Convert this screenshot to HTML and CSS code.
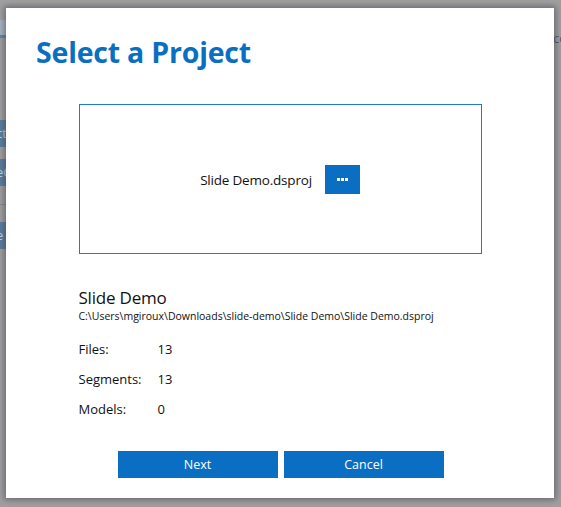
FILE: index.html
```html
<!DOCTYPE html>
<html>
<head>
<meta charset="utf-8">
<link rel="stylesheet" href="styles.css">
</head>
<body>
<div class="app">
  <div class="app-left">
    <div class="app-head"></div>
    <div class="app-tab tab1">ct</div>
    <div class="app-tab tab2">eC</div>
    <div class="app-sep"></div>
    <div class="app-tab tab3">e</div>
  </div>
  <div class="app-right">co</div>

  <div class="dialog">
    <h1 class="title">Select a Project</h1>
    <div class="content">
      <div class="picker">
        <span class="picker-name">Slide Demo.dsproj</span>
        <button class="browse" aria-label="Browse">
          <svg width="11" height="3" viewBox="0 0 11 3"><rect x="0" y="0" width="3" height="3" fill="#fff"/><rect x="4" y="0" width="3" height="3" fill="#fff"/><rect x="8" y="0" width="3" height="3" fill="#fff"/></svg>
        </button>
      </div>
      <div class="project">
        <div class="project-name">Slide Demo</div>
        <div class="project-path">C:\Users\mgiroux\Downloads\slide-demo\Slide Demo\Slide Demo.dsproj</div>
      </div>
      <dl class="stats">
        <dt>Files:</dt><dd>13</dd>
        <dt>Segments:</dt><dd>13</dd>
        <dt>Models:</dt><dd>0</dd>
      </dl>
    </div>
    <div class="actions">
      <button class="btn">Next</button>
      <button class="btn">Cancel</button>
    </div>
  </div>
</div>
</body>
</html>
```

FILE: styles.css
```css
* { box-sizing: border-box; }
html, body { margin: 0; padding: 0; }
body {
  width: 561px;
  height: 507px;
  overflow: hidden;
  background: #a0a0a0;
  font-family: "Open Sans", "Noto Sans", sans-serif;
  color: #1a1a1a;
}
.app { position: relative; width: 561px; height: 507px; }

.app-left {
  position: absolute; left: 0; top: 0; width: 8px; height: 507px;
}
.app-head {
  position: absolute; left: 0; top: 20px; width: 8px; height: 18px;
  background: #a9b4c0; border-bottom: 3px solid #5f86aa;
}
.app-tab {
  position: absolute; left: 0; width: 8px; height: 27px;
  background: #5a7e9e; color: #c8d4e0; font-size: 13px; line-height: 27px;
  overflow: hidden; text-indent: -4px;
}
.tab1 { top: 120px; }
.tab2 { top: 159px; }
.tab3 { top: 222px; }
.app-sep {
  position: absolute; left: 0; top: 204px; width: 8px; height: 1px; background: #8a8a8a;
}
.app-right {
  position: absolute; left: 553px; top: 29px; font-size: 13px; color: #505a66;
}

.dialog {
  position: absolute; left: 6px; top: 8px; width: 548px; height: 490px;
  background: #fff;
  box-shadow: 0 0 6px 2px rgba(60, 60, 80, 0.55);
  display: flex; flex-direction: column;
}
.title {
  margin: 0; padding: 24px 0 0 30px;
  font-size: 28.5px; font-weight: 700; color: #0a6fc2;
  line-height: 40px; letter-spacing: -0.2px;
}
.content {
  width: 403px; margin: 32px auto 0;
  display: flex; flex-direction: column;
}
.picker {
  height: 150px;
  border: 1px solid #1f7bd0;
  display: flex; align-items: center; justify-content: center; gap: 13px;
  padding-top: 1px;
}
.picker-name { font-size: 13.5px; color: #111; letter-spacing: -0.2px; }
.browse {
  width: 35px; height: 29px; border: 0; padding: 0; margin: 0;
  background: #0a6fc2;
  display: flex; align-items: center; justify-content: center;
}
.browse svg { display: block; }
.project { margin-top: 33px; }
.project-name { font-size: 17px; line-height: 22px; color: #111; letter-spacing: -0.2px; }
.project-path { font-size: 10.5px; line-height: 14px; color: #111; letter-spacing: 0; }
.stats {
  margin: 17px 0 0; display: grid; grid-template-columns: 79px auto;
  row-gap: 12px; font-size: 13px; line-height: 18px; color: #111;
}
.stats dt, .stats dd { margin: 0; }
.actions {
  margin-top: auto; margin-bottom: 20px;
  display: flex; justify-content: center; gap: 6px; padding-left: 1px;
}
.btn {
  width: 160px; height: 27px; border: 0; margin: 0; padding: 0;
  background: #0a6fc2; color: #fff;
  font-family: "Open Sans", "Noto Sans", sans-serif; font-size: 12.5px;
}
```
